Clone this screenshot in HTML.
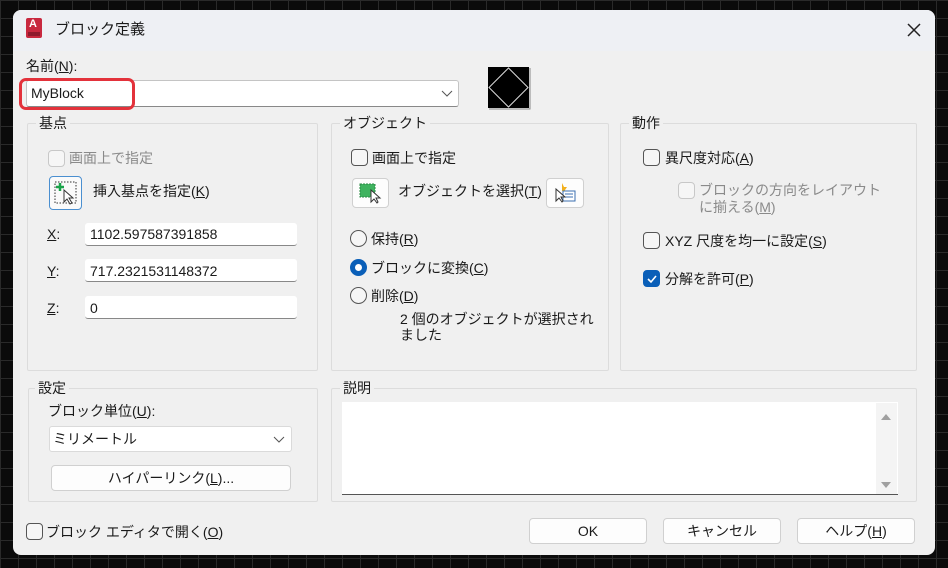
<!DOCTYPE html>
<html><head><meta charset="utf-8"><style>
*{margin:0;padding:0;box-sizing:border-box}
body{width:948px;height:568px;overflow:hidden;background-color:#0b0b0b;
background-image:linear-gradient(#2a2a2a 1px,transparent 1px),linear-gradient(90deg,#2a2a2a 1px,transparent 1px);background-size:18px 18px;
font-family:"Liberation Sans","Noto Sans CJK JP",sans-serif;font-size:14px;color:#1a1a1a;position:relative}
.a{position:absolute;white-space:nowrap}
.dlg{position:absolute;left:13px;top:10px;width:922px;height:545px;background:#f0f0f0;border-radius:8px;overflow:hidden}
.tb{position:absolute;left:0;top:0;width:100%;height:41px;background:#eef0f4}
.t{position:absolute;line-height:16px;white-space:nowrap}
.grp{position:absolute;border:1px solid #dcdcdc;border-radius:2px}
.gl{position:absolute;top:-10px;left:8px;background:#f0f0f0;padding:0 3px;line-height:18px;font-size:14px}
.inp{position:absolute;background:#fff;border-bottom:1px solid #888;border-radius:3px}
.cb{position:absolute;width:17px;height:17px;border:1px solid #555;border-radius:4px;background:#f6f6f6}
.cb.d{border-color:#c8c8c8}
.rd{position:absolute;width:17px;height:17px;border:1px solid #555;border-radius:50%;background:#f6f6f6}
.btn{position:absolute;background:#fdfdfd;border:1px solid #d0d0d0;border-radius:4px;text-align:center;line-height:24px}
.g{color:#8a8a8a}
u{text-decoration:underline}
</style></head><body>
<div class="dlg">
<div class="tb"></div>
<div class="a" style="left:13px;top:8px;width:16px;height:20px;background:#c8283e;border-radius:2px"></div>
<div class="a" style="left:16px;top:8px;color:#fff;font-size:11px;font-weight:bold;line-height:13px">A</div>
<div class="a" style="left:15px;top:22px;width:12px;height:4px;background:#8e1a2c"></div>
<div class="t" style="left:42px;top:12px;font-size:15px">ブロック定義</div>
<svg class="a" style="left:893px;top:12px" width="16" height="16"><path d="M2 2L14 14M14 2L2 14" stroke="#222" stroke-width="1.5"/></svg>

<div class="t" style="left:13px;top:48px">名前(<u>N</u>):</div>
<div class="inp" style="left:13px;top:70px;width:433px;height:27px;border:1px solid #c4c4c4;border-bottom-color:#888"></div>
<div class="t" style="left:18px;top:75px">MyBlock</div>
<svg class="a" style="left:428px;top:80px" width="12" height="8"><path d="M1 1L6 6L11 1" stroke="#555" fill="none"/></svg>
<div class="a" style="left:6px;top:68px;width:116px;height:32px;border:3px solid #e3323b;border-radius:7px"></div>
<svg class="a" style="left:475px;top:57px" width="43" height="43"><rect x="0" y="0" width="41" height="41" fill="#000"/><path d="M20.5 1L40 20.5L20.5 40L1 20.5Z" stroke="#ddd" fill="none"/><path d="M42 1V42H1" stroke="#888" fill="none"/></svg>

<div class="grp" style="left:14px;top:113px;width:291px;height:248px"><div class="gl">基点</div></div>
<div class="cb d" style="left:35px;top:140px"></div>
<div class="t g" style="left:56px;top:140px">画面上で指定</div>
<div class="a" style="left:36px;top:166px;width:33px;height:34px;border:1px solid #4a8fd0;border-radius:4px;background:#fafafa"></div>
<svg class="a" style="left:40px;top:170px" width="26" height="26"><rect x="2" y="2" width="21" height="21" fill="none" stroke="#333" stroke-dasharray="1.5 1.5"/><path d="M7 3V11M3 7H11" stroke="#1aa34a" stroke-width="2.5"/><path d="M11 10L11 22L14 19L17 24L19 23L16 18L20 18Z" fill="#fff" stroke="#333"/></svg>
<div class="t" style="left:80px;top:173px">挿入基点を指定(<u>K</u>)</div>
<div class="t" style="left:34px;top:216px"><u>X</u>:</div>
<div class="inp" style="left:72px;top:213px;width:212px;height:23px"></div>
<div class="t" style="left:77px;top:216px">1102.597587391858</div>
<div class="t" style="left:34px;top:253px"><u>Y</u>:</div>
<div class="inp" style="left:72px;top:249px;width:212px;height:23px"></div>
<div class="t" style="left:77px;top:253px">717.2321531148372</div>
<div class="t" style="left:34px;top:290px"><u>Z</u>:</div>
<div class="inp" style="left:72px;top:286px;width:212px;height:23px"></div>
<div class="t" style="left:77px;top:290px">0</div>

<div class="grp" style="left:318px;top:113px;width:278px;height:248px"><div class="gl">オブジェクト</div></div>
<div class="cb" style="left:338px;top:139px"></div>
<div class="t" style="left:359px;top:140px">画面上で指定</div>
<div class="btn" style="left:339px;top:168px;width:37px;height:30px"></div>
<svg class="a" style="left:346px;top:172px" width="24" height="22"><rect x="1" y="2" width="15" height="13" fill="#3fb35f" stroke="#2a8a44" stroke-dasharray="2 1"/><path d="M12 8L12 20L15 17L18 21L19 20L17 16L21 16Z" fill="#fff" stroke="#333"/></svg>
<div class="t" style="left:385px;top:173px">オブジェクトを選択(<u>T</u>)</div>
<div class="btn" style="left:533px;top:168px;width:38px;height:30px"></div>
<svg class="a" style="left:540px;top:171px" width="26" height="24"><path d="M9 2L11 6L14 6L12 9L13 12L9 10" fill="#f2b01e"/><rect x="10" y="10" width="12" height="10" fill="#fff" stroke="#3b6fb0"/><path d="M12 13H20M12 16H20" stroke="#3b6fb0"/><path d="M3 8L3 20L6 17L9 21L10 20L8 16L12 16Z" fill="#fff" stroke="#333"/></svg>
<div class="rd" style="left:337px;top:220px"></div>
<div class="t" style="left:358px;top:221px">保持(<u>R</u>)</div>
<div class="rd" style="left:337px;top:249px;border:5px solid #0a5fb8;background:#fff"></div>
<div class="t" style="left:358px;top:250px">ブロックに変換(<u>C</u>)</div>
<div class="rd" style="left:337px;top:277px"></div>
<div class="t" style="left:358px;top:278px">削除(<u>D</u>)</div>
<div class="t" style="left:387px;top:301px">2 個のオブジェクトが選択され</div>
<div class="t" style="left:387px;top:317px">ました</div>

<div class="grp" style="left:607px;top:113px;width:297px;height:248px"><div class="gl">動作</div></div>
<div class="cb" style="left:630px;top:139px"></div>
<div class="t" style="left:652px;top:140px">異尺度対応(<u>A</u>)</div>
<div class="cb d" style="left:665px;top:172px"></div>
<div class="t g" style="left:686px;top:172px">ブロックの方向をレイアウト</div>
<div class="t g" style="left:686px;top:189px">に揃える(<u>M</u>)</div>
<div class="cb" style="left:630px;top:222px"></div>
<div class="t" style="left:652px;top:223px">XYZ 尺度を均一に設定(<u>S</u>)</div>
<div class="cb" style="left:630px;top:260px;background:#0a5fb8;border-color:#0a5fb8"></div>
<svg class="a" style="left:632px;top:262px" width="14" height="14"><path d="M3 7L6 10L11 4" stroke="#fff" stroke-width="1.6" fill="none"/></svg>
<div class="t" style="left:652px;top:261px">分解を許可(<u>P</u>)</div>

<div class="grp" style="left:15px;top:378px;width:290px;height:114px"><div class="gl" style="left:6px">設定</div></div>
<div class="t" style="left:35px;top:393px">ブロック単位(<u>U</u>):</div>
<div class="inp" style="left:36px;top:416px;width:243px;height:26px;border:1px solid #dadada"></div>
<div class="t" style="left:40px;top:421px">ミリメートル</div>
<svg class="a" style="left:260px;top:426px" width="12" height="8"><path d="M1 1L6 6L11 1" stroke="#555" fill="none"/></svg>
<div class="btn" style="left:38px;top:455px;width:240px;height:26px">ハイパーリンク(<u>L</u>)...</div>

<div class="grp" style="left:318px;top:378px;width:586px;height:114px"><div class="gl">説明</div></div>
<div class="a" style="left:329px;top:392px;width:556px;height:93px;background:#fff;border-bottom:1px solid #555"></div>
<div class="a" style="left:863px;top:393px;width:21px;height:91px;background:#f4f4f4"></div>
<svg class="a" style="left:866px;top:401px" width="14" height="80"><path d="M2 9L7 3L12 9Z" fill="#a0a0a0"/><path d="M2 71L7 77L12 71Z" fill="#a0a0a0"/></svg>

<div class="cb" style="left:13px;top:513px"></div>
<div class="t" style="left:33px;top:514px">ブロック エディタで開く(<u>O</u>)</div>
<div class="btn" style="left:516px;top:508px;width:118px;height:26px">OK</div>
<div class="btn" style="left:650px;top:508px;width:118px;height:26px">キャンセル</div>
<div class="btn" style="left:784px;top:508px;width:118px;height:26px">ヘルプ(<u>H</u>)</div>
</div>
</body></html>
